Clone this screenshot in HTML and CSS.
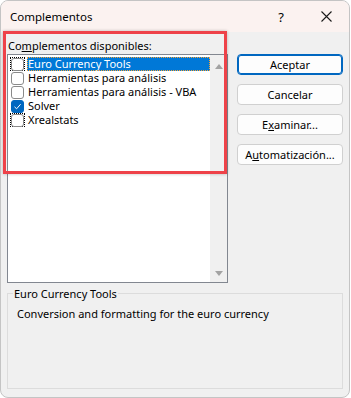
FILE: index.html
```html
<!DOCTYPE html>
<html lang="es">

<head>
    <meta charset="UTF-8">
    <meta name="viewport" content="width=device-width, initial-scale=1.0">
    <title>Complementos</title>
    <link rel="stylesheet" href="styles.css">
</head>

<body>
    <div class="window">
        <div class="titlebar">
            <span class="title">Complementos</span>
            <span class="help">?</span>
            <span class="close">
                <svg width="11" height="11" viewBox="0 0 11 11">
                    <path d="M0.5 0.5 L10.5 10.5 M10.5 0.5 L0.5 10.5" stroke="#1a1a1a" stroke-width="1.1" fill="none"/>
                </svg>
            </span>
        </div>

        <div class="content">
            <div class="top">
                <div class="addins">
                    <div class="label">Co<u>m</u>plementos disponibles:</div>
                    <div class="listbox">
                        <ul class="items">
                            <li class="item selected">
                                <span class="box focus"><span class="check"></span></span>
                                <span class="name">Euro Currency Tools</span>
                            </li>
                            <li class="item">
                                <span class="box"><span class="check"></span></span>
                                <span class="name">Herramientas para análisis</span>
                            </li>
                            <li class="item">
                                <span class="box"><span class="check"></span></span>
                                <span class="name">Herramientas para análisis - VBA</span>
                            </li>
                            <li class="item">
                                <span class="box"><span class="check checked">
                                    <svg width="9" height="9" viewBox="0 0 9 9">
                                        <path d="M1.5 4.8 L3.6 6.8 L7.6 2.2" stroke="#fff" stroke-width="1" fill="none"/>
                                    </svg>
                                </span></span>
                                <span class="name">Solver</span>
                            </li>
                            <li class="item">
                                <span class="box focus"><span class="check"></span></span>
                                <span class="name">Xrealstats</span>
                            </li>
                        </ul>
                        <div class="scrollbar">
                            <span class="arrow up"></span>
                            <span class="arrow down"></span>
                        </div>
                    </div>
                </div>

                <div class="buttons">
                    <button class="btn default">Aceptar</button>
                    <button class="btn">Cancelar</button>
                    <button class="btn">E<u>x</u>aminar...</button>
                    <button class="btn">A<u>u</u>tomatización...</button>
                </div>
            </div>

            <fieldset class="details">
                <legend>Euro Currency Tools</legend>
                <p>Conversion and formatting for the euro currency</p>
            </fieldset>
        </div>

        <div class="highlight"></div>
    </div>
</body>

</html>
```

FILE: styles.css
```css
body,
html {
    margin: 0;
    background-color: #fff;
}

body {
    font-family: "Noto Sans", "Open Sans", sans-serif;
    font-size: 11px;
    color: #000;
}

.window {
    position: relative;
    width: 348px;
    height: 396px;
    border: 1px solid #c4c4c4;
    border-radius: 8px;
    background-color: #f0f0f0;
    overflow: hidden;
    display: flex;
    flex-direction: column;
}

.titlebar {
    height: 31px;
    flex: none;
    background-color: #fbf2f0;
    display: flex;
    align-items: center;
    padding-left: 9px;
    box-sizing: border-box;
}

.title {
    flex: 1;
    font-size: 11.5px;
}

.help {
    width: 46px;
    text-align: center;
    font-size: 13px;
    margin-right: -1px;
}

.close {
    width: 46px;
    display: flex;
    justify-content: center;
}

.content {
    flex: 1;
    display: flex;
    flex-direction: column;
    padding: 6px 6px 0 6px;
}

.top {
    display: flex;
    gap: 9px;
}

.addins {
    width: 221px;
}

.label {
    height: 16px;
    line-height: 16px;
    padding-left: 1px;
}

.listbox {
    height: 227px;
    border: 1px solid #828790;
    background-color: #fff;
    display: flex;
}

.items {
    list-style: none;
    margin: 0;
    padding: 2px 0 0 2px;
    flex: 1;
}

.item {
    height: 14px;
    display: flex;
    align-items: center;
}

.box {
    width: 15px;
    height: 14px;
    box-sizing: border-box;
    border: 1px dotted transparent;
    display: flex;
    align-items: center;
    justify-content: center;
    flex: none;
}

.box.focus {
    border-color: #000;
}

.check {
    width: 13px;
    height: 13px;
    box-sizing: border-box;
    border: 1px solid #8a8a8a;
    border-radius: 3px;
    background-color: #fff;
    display: flex;
    align-items: center;
    justify-content: center;
}

.check.checked {
    background-color: #0067c0;
    border-color: #0067c0;
}

.name {
    margin-left: 2px;
    padding: 0 1px;
    height: 14px;
    line-height: 14px;
    white-space: nowrap;
}

.selected .name {
    flex: 1;
    background-color: #0078d7;
    color: #fff;
    outline: 1px dotted #f7a336;
    outline-offset: -1px;
}

.scrollbar {
    width: 17px;
    background-color: #f0f0f0;
    display: flex;
    flex-direction: column;
    justify-content: space-between;
    align-items: center;
    padding: 9px 0 6px;
}

.arrow {
    width: 0;
    height: 0;
    border-left: 4px solid transparent;
    border-right: 4px solid transparent;
}

.arrow.up {
    border-bottom: 5px solid #a3a3a3;
}

.arrow.down {
    border-top: 5px solid #a3a3a3;
}

.buttons {
    display: flex;
    flex-direction: column;
    gap: 9px;
    padding-top: 16px;
}

.btn {
    width: 106px;
    height: 21px;
    padding: 0;
    font-family: inherit;
    font-size: 11px;
    color: #000;
    background-color: #fdfdfd;
    border: 1px solid #d0d0d0;
    border-radius: 4px;
}

.btn.default {
    border: 1px solid #0067c0;
    box-shadow: inset 0 0 0 1px #0067c0;
}

.details {
    box-sizing: border-box;
    margin: 3px 0 0 0;
    height: 103px;
    border: 1px solid #dcdcdc;
    padding: 0 8px;
}

.details legend {
    padding: 0 1px;
    margin-left: -3px;
    line-height: 15px;
}

.details p {
    margin: 5px 0 0 1px;
    line-height: 15px;
}

.highlight {
    position: absolute;
    left: 2px;
    top: 30px;
    width: 218px;
    height: 137px;
    border: 3px solid #ee4249;
    box-shadow: 0 0 3px rgba(0, 0, 0, 0.25);
}
```
